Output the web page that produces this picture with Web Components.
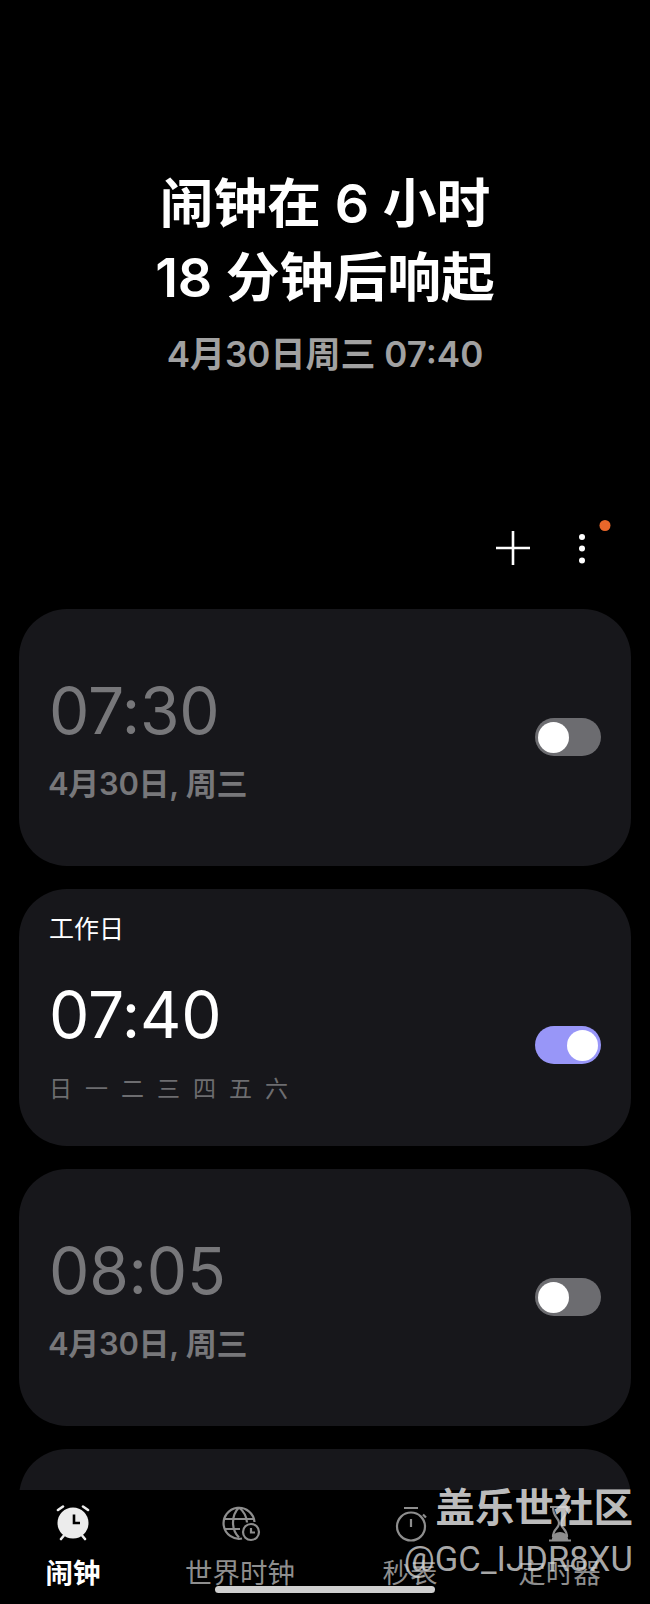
<!DOCTYPE html>
<html lang="zh"><head><meta charset="utf-8"><title>闹钟</title>
<style>
html,body{margin:0;padding:0;background:#000}
body{font-family:Roboto,"Noto Sans CJK SC",sans-serif}
</style></head>
<body>
<clock-app>
  <next-alarm slot="head" line1="闹钟在 6 小时" line2="18 分钟后响起" sub="4月30日周三 07:40"></next-alarm>
  <alarm-toolbar slot="head"></alarm-toolbar>
  <alarm-card time="07:30" date="4月30日, 周三"></alarm-card>
  <alarm-card time="07:40" label="工作日" days="日,一,二,三,四,五,六" on></alarm-card>
  <alarm-card time="08:05" date="4月30日, 周三"></alarm-card>
  <alarm-card></alarm-card>
  <tab-bar slot="tabs"></tab-bar>
</clock-app>
<script>
const def=(name,html,init)=>customElements.define(name,class extends HTMLElement{
  connectedCallback(){
    if(this.shadowRoot)return;
    const r=this.attachShadow({mode:'open'});
    r.innerHTML=html;
    if(init)init(this,r);
  }
});
def('clock-app',`<style>
:host{display:flex;flex-direction:column;width:650px;height:1604px;background:#000;color:#fff;position:relative;overflow:hidden}
.list{flex:1;min-height:0;overflow:hidden;display:flex;flex-direction:column;gap:23px;padding:0 19px}
.mark{position:absolute;right:17px;top:1481px;text-align:right;color:rgba(222,222,222,.86);pointer-events:none}
.a{font:700 39.500px/48px "Noto Sans CJK SC",sans-serif}
.b{font:400 34.500px/40px Roboto,sans-serif;margin-top:10px;color:rgba(215,215,215,.78);letter-spacing:.1px}
.bar{position:absolute;left:215px;top:1586px;width:220px;height:7px;border-radius:4px;background:#cfcfcf}
</style>
<slot name="head"></slot><div class="list"><slot></slot></div><slot name="tabs"></slot>
<div class="mark"><div class="a">盖乐世社区</div><div class="b">@GC_IJDR8XU</div></div><div class="bar"></div>`);
def('next-alarm',`<style>
:host{display:block;height:500px;box-sizing:border-box;padding-top:167px;text-align:center}
.t{font:600 53.800px/74px Inter,"Noto Sans CJK SC",sans-serif;color:#fff}
.s{font:600 35px/44px Inter,"Noto Sans CJK SC",sans-serif;color:#a1a1a1;margin-top:17px}
</style><div class="t" id="a"></div><div class="t" id="b"></div><div class="s" id="c"></div>`,
(h,r)=>{r.getElementById('a').textContent=h.getAttribute('line1');r.getElementById('b').textContent=h.getAttribute('line2');r.getElementById('c').textContent=h.getAttribute('sub');});
def('alarm-toolbar',`<style>
:host{display:flex;height:108.500px;justify-content:flex-end;box-sizing:border-box;padding:16px 43px 0 0;gap:52px}
svg{display:block}
</style>
<svg width="36" height="60" viewBox="0 0 36 60" aria-label="添加"><path d="M18 15v34M1 32h34" stroke="#fff" stroke-width="2.6" fill="none"/></svg>
<svg width="24" height="60" viewBox="0 0 24 60" aria-label="更多" style="overflow:visible"><circle cx="-1" cy="21" r="3" fill="#fff"/><circle cx="-1" cy="32.500" r="3" fill="#fff"/><circle cx="-1" cy="44.500" r="3" fill="#fff"/><circle cx="22" cy="9.500" r="5.500" fill="#e8672a"/></svg>`);
def('alarm-toggle',`<style>
:host{display:block;width:66px;height:38px;border-radius:19px;background:var(--track,#6c6c70);position:relative;flex:none}
i{position:absolute;top:3.500px;left:var(--knob,3px);width:31px;height:31px;border-radius:50%;background:#fff}
</style><i></i>`);
def('alarm-card',`<style>
:host{display:flex;flex-direction:column;flex:none;height:257px;box-sizing:border-box;border-radius:48px;background:#17171b;padding:0 30px 0 30px}
.label{font:400 25px/30px "Noto Sans CJK SC",sans-serif;color:#fff;margin-top:23px;margin-bottom:1px}
.row{flex:1;display:flex;align-items:center;justify-content:space-between}
:host([on]) .row{padding-top:2px}
.left{margin-top:5px}
:host([on]) .left{margin-top:0;margin-bottom:7px}
.time{font:400 64px/72px Inter,sans-serif;color:#77777a;letter-spacing:-.2px}
.sub{font:600 31px/40px Inter,"Noto Sans CJK SC",sans-serif;color:#77777a;margin-top:16.500px;margin-left:-1px;letter-spacing:-.3px}
.days{display:flex;gap:13px;font:400 23px/34px "Noto Sans CJK SC",sans-serif;color:#6d6d70;margin-top:18.500px}
:host([on]) .time{color:#fff}
</style><div class="label" id="l"></div><div class="row"><div class="left"><div class="time" id="t"></div><div class="sub" id="s"></div><div class="days" id="d"></div></div><alarm-toggle id="g"></alarm-toggle></div>`,
(h,r)=>{
  const $=i=>r.getElementById(i),g=n=>h.getAttribute(n);
  if(g('label'))$('l').textContent=g('label');else $('l').remove();
  if(!g('time')){$('g').remove();return;}
  $('t').textContent=g('time');
  if(g('date'))$('s').textContent=g('date');else $('s').remove();
  if(g('days'))g('days').split(',').forEach(x=>{const s=document.createElement('span');s.textContent=x;$('d').append(s);});else $('d').remove();
  if(h.hasAttribute('on')){$('g').style.setProperty('--track','#9896f8');$('g').style.setProperty('--knob','32px');}
});
def('tab-bar',`<style>
:host{display:grid;grid-template-columns:146px 188px 152px 147px;height:114px;background:#000;flex:none;padding-right:17px}
div{display:flex;flex-direction:column;align-items:center;font:400 27.500px/36px "Noto Sans CJK SC",sans-serif;color:#8e8e8e;padding-top:14px}
svg{display:block;margin-bottom:9px}
.on{color:#fff;font-weight:700}
</style>
<div class="on"><svg width="40" height="40" viewBox="0 0 40 40" fill="none"><circle cx="20" cy="19" r="15.500" fill="#ececec"/><path d="M21 10.500v8.500h6" stroke="#000" stroke-width="2.600"/><path d="M5 6l5-3.500M35 6l-5-3.500M8 35l2.500-3M32 35l-2.500-3" stroke="#ececec" stroke-width="2.600" stroke-linecap="round"/></svg>闹钟</div>
<div><svg width="40" height="40" viewBox="0 0 40 40" fill="none" stroke="#8e8e8e" stroke-width="2.200" style="transform:translateX(1px)"><path d="M21 34.500A15.500 15.500 0 1 1 33.500 18"/><path d="M4 15h28M4 25h15M18 3.500c-8 8-8 22 0 30M18 3.500c5 4 7.500 9 8 15"/><circle cx="30" cy="28" r="8" /><path d="M30 24v4.500h4"/></svg>世界时钟</div>
<div><svg width="40" height="40" viewBox="0 0 40 40" fill="none" stroke="#8e8e8e" stroke-width="2.200" style="transform:translateX(2px)"><circle cx="19" cy="22.500" r="14"/><path d="M12 4h14M19 15v8M31 10.500l3 3" /></svg>秒表</div>
<div><svg width="40" height="40" viewBox="0 0 40 40" fill="none" stroke="#8e8e8e" stroke-width="2.200"><path d="M10 3h20M9 36.500h22M13 3c0 11 6 10 6 16s-6 5-6 14M27 3c0 11-6 10-6 16s6 5 6 14"/><path d="M13 35c0-8 14-8 14 0z" fill="#8e8e8e"/></svg>定时器</div>`);
</script>
</body></html>
